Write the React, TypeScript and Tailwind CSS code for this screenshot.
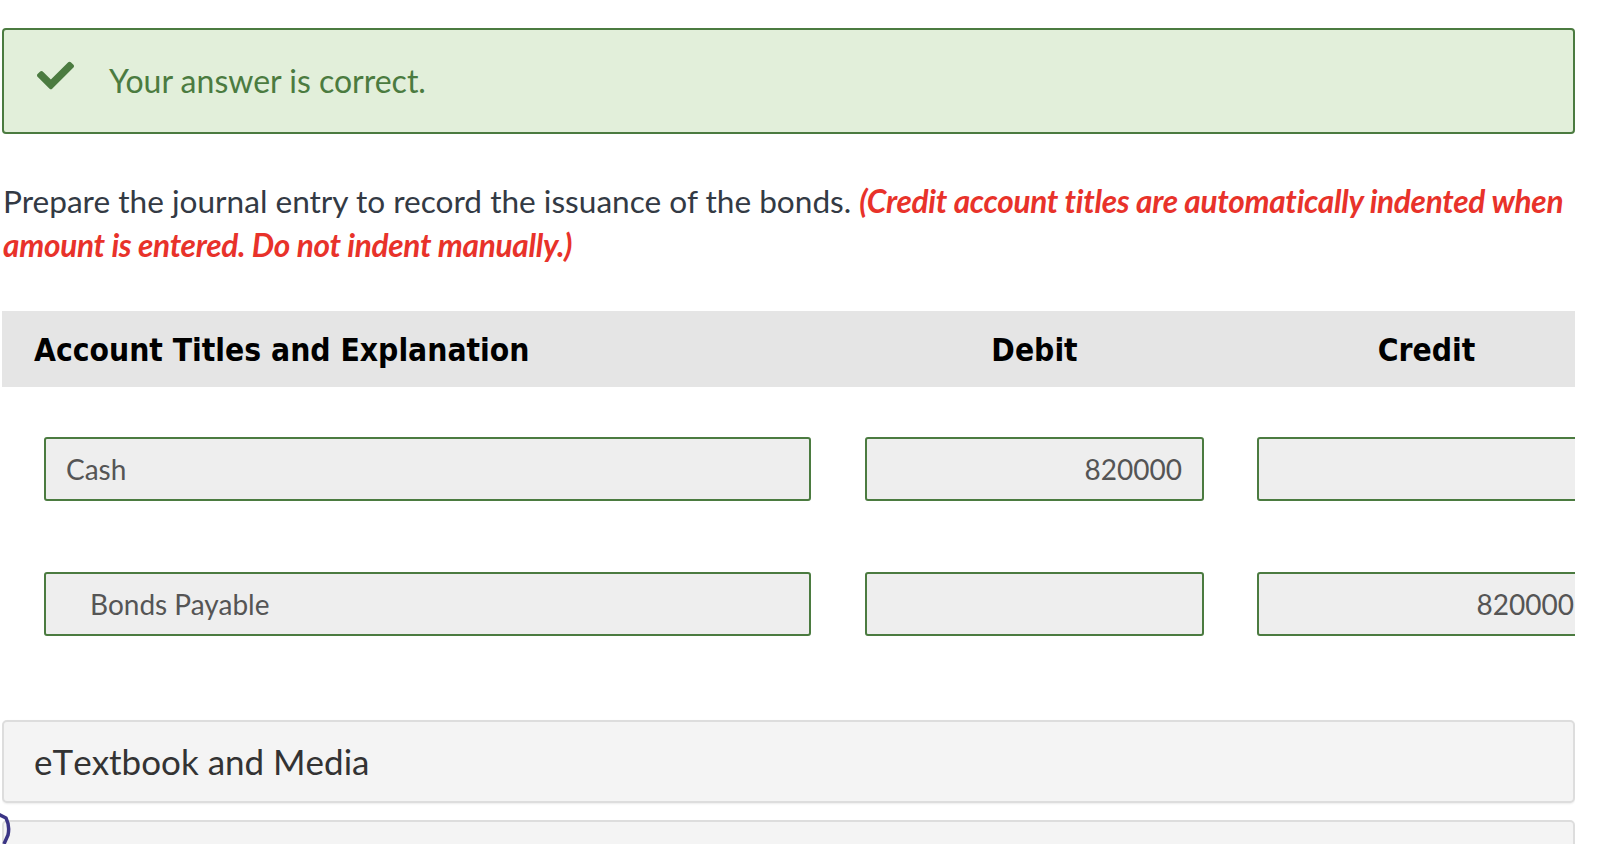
import { useState } from 'react';

const lato = "font-['Lato','Liberation_Sans',sans-serif]";
const headFont = "font-['DejaVu_Sans_Condensed','DejaVu_Sans',sans-serif]";

function CheckIcon() {
  return (
    <svg viewBox="0 0 512 512" className="w-[37px] h-[37px] -mt-[11px]" fill="#4b7b40" preserveAspectRatio="none">
      <path d="M173.898 439.404l-166.4-166.4c-9.997-9.997-9.997-26.206 0-36.204l36.203-36.204c9.997-9.998 26.207-9.998 36.204 0L192 312.69 432.095 72.596c9.997-9.997 26.207-9.997 36.204 0l36.203 36.204c9.997 9.997 9.997 26.206 0 36.204l-294.4 294.401c-9.998 9.997-26.207 9.997-36.204-.001z" />
    </svg>
  );
}

function TitleBox({ value, indent }: { value: string; indent?: boolean }) {
  return (
    <div
      className={`h-[64px] border-2 border-[#4b7b40] rounded-[3px] bg-[#eeeeee] flex items-center text-[28px] text-[#555555] ${
        indent ? 'pl-[44px]' : 'pl-[20px]'
      }`}
    >
      {value}
    </div>
  );
}

function NumberBox({ value }: { value: string }) {
  return (
    <div className="w-[339px] shrink-0 h-[64px] border-2 border-[#4b7b40] rounded-[3px] bg-[#eeeeee] flex items-center justify-end pr-[20px] text-[28px] text-[#555555]">
      {value}
    </div>
  );
}

const rows = [
  { title: 'Cash', debit: '820000', credit: '', indent: false },
  { title: 'Bonds Payable', debit: '', credit: '820000', indent: true },
];

export default function App() {
  const [open] = useState(false);

  return (
    <div className={`relative w-full h-[844px] overflow-hidden bg-white ${lato}`}>
      <div className="ml-[2px] w-[1573px] overflow-hidden">
        {/* Result banner */}
        <div className="mt-[28px] h-[106px] border-2 border-[#4b7b40] rounded-[4px] bg-[#e2efda] flex items-center pl-[33px]">
          <CheckIcon />
          <span className="ml-[35px] text-[32px] text-[#4b7b40]">Your answer is correct.</span>
        </div>

        {/* Instructions */}
        <p className="mt-[45px] pl-[1px] text-[31.6px] leading-[44px] text-[#333a44]">
          Prepare the journal entry to record the issuance of the bonds.{' '}
          <span className="font-bold italic text-[#e8322a] tracking-[-0.3px]">
            (Credit account titles are automatically indented when amount is entered. Do not indent manually.)
          </span>
        </p>

        {/* Table header */}
        <div className={`mt-[44px] h-[76px] pt-[4px] bg-[#e5e5e5] flex items-center font-bold text-[31.5px] text-black ${headFont}`}>
          <div className="w-[809px] shrink-0 pl-[32px]">Account Titles and Explanation</div>
          <div className="ml-[54px] w-[339px] shrink-0 text-center">Debit</div>
          <div className="ml-[53px] w-[339px] shrink-0 text-center">Credit</div>
        </div>

        {/* Entry rows */}
        <div className="mt-[50px] flex flex-col gap-[71px]">
          {rows.map((r) => (
            <div key={r.title} className="flex items-center pl-[42px]">
              <div className="w-[767px] shrink-0">
                <TitleBox value={r.title} indent={r.indent} />
              </div>
              <div className="ml-[54px]">
                <NumberBox value={r.debit} />
              </div>
              <div className="ml-[53px]">
                <NumberBox value={r.credit} />
              </div>
            </div>
          ))}
        </div>

        {/* Resources */}
        <div className="mt-[84px] h-[83px] border-2 border-[#dddddd] rounded-[5px] bg-[#f4f4f4] shadow-[0_1px_2px_rgba(0,0,0,0.08)] flex items-center pl-[30px] text-[35px] text-[#333333] [font-kerning:none]">
          eTextbook and Media
        </div>
        <div className="mt-[17px] h-[60px] border-2 border-[#dddddd] rounded-[5px] bg-[#f4f4f4]">
          {open && <div />}
        </div>
      </div>

      {/* focus ring fragment at left edge */}
      <svg className="absolute left-0 top-[811px] w-[14px] h-[33px]" viewBox="0 0 14 33" fill="none">
        <path d="M-4 2 L6 7 Q10 15 8 24 L4 33" stroke="#3b3585" strokeWidth="3.5" strokeLinejoin="round" />
      </svg>
    </div>
  );
}
